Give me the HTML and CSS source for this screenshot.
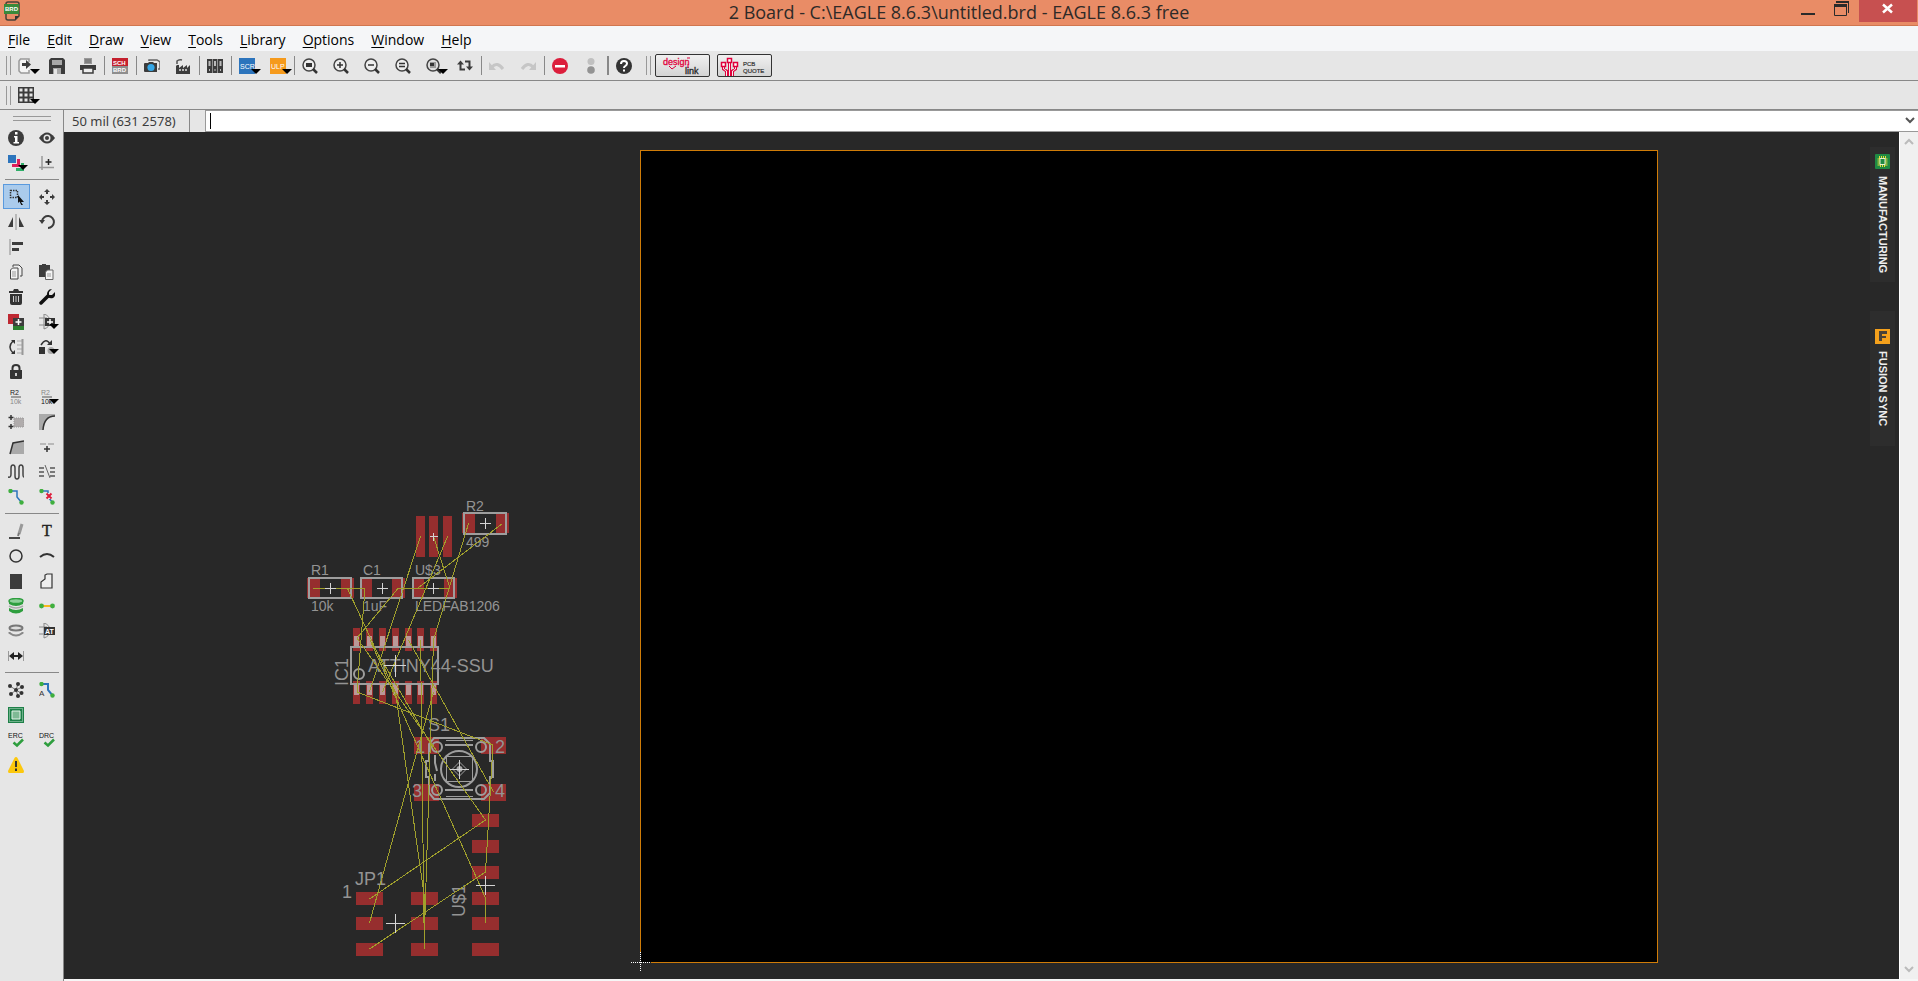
FILE: index.html
```html
<!DOCTYPE html>
<html lang="en">
<head>
  <meta charset="UTF-8">
  <meta name="viewport" content="width=device-width, initial-scale=1.0">
  <title>2 Board - C:\EAGLE 8.6.3\untitled.brd - EAGLE 8.6.3 free</title>
  <link rel="stylesheet" href="styles.css">
</head>

<body>
  <header class="titlebar">
    <svg class="app-icon" viewBox="0 0 16 20">
      <path d="M4 1h9q2 0 2 2v12l-4 4H4q-2 0-2-2V3q0-2 2-2z" fill="none" stroke="#4a4038" stroke-width="1.5"/>
      <path d="M15 15l-4 4v-4z" fill="#333"/>
      <rect x="0" y="3" width="15" height="10" fill="#3a8a3a"/>
      <text x="1" y="10" font-size="6" font-weight="bold" fill="#fff">BRD</text>
    </svg>
    <h1>2 Board - C:\EAGLE 8.6.3\untitled.brd - EAGLE 8.6.3 free</h1>
    <div class="window-buttons">
      <button aria-label="Minimize"><svg viewBox="0 0 16 18"><path d="M1 13h14v2H1z" fill="#2a2a2a"/></svg></button>
      <button aria-label="Restore"><svg viewBox="0 0 16 18"><path d="M2 1h13v12h-1V3H2z" fill="#2a2a2a"/><path d="M.5 4.500h12v11H.5z" fill="none" stroke="#2a2a2a"/><path d="M0 4h13v3H0z" fill="#2a2a2a"/></svg></button>
      <button class="close" aria-label="Close"><svg viewBox="0 0 16 18"><path d="M3 4.500l9 8M12 4.500l-9 8" stroke="#fff" stroke-width="2.500"/></svg></button>
    </div>
  </header>

  <nav class="menubar">
    <a href="#"><u>F</u>ile</a>
    <a href="#"><u>E</u>dit</a>
    <a href="#"><u>D</u>raw</a>
    <a href="#"><u>V</u>iew</a>
    <a href="#"><u>T</u>ools</a>
    <a href="#"><u>L</u>ibrary</a>
    <a href="#"><u>O</u>ptions</a>
    <a href="#"><u>W</u>indow</a>
    <a href="#"><u>H</u>elp</a>
  </nav>

  <div class="toolbar">
    <span class="handle"></span>
    <button class="tool drop" aria-label="Open"><svg viewBox="0 0 16 16"><path d="M11 4V1H2.500L1 3v10l2 2h8v-3" fill="#f4f4f4" stroke="#999" stroke-width="1.500"/><path d="M4 5h4V2l5 4.500L8 11V8H4z" fill="#3c3c3c"/></svg></button>
    <button class="tool" aria-label="Save"><svg viewBox="0 0 16 16"><path d="M2 0h12l2 2v14H0V2z" fill="#3c3c3c"/><path d="M3 2h10v5H3zM4 10h8v6H4z" fill="#a8a8a8"/><path d="M5 11h3v5H5z" fill="#e6e6e6"/></svg></button>
    <button class="tool" aria-label="Print"><svg viewBox="0 0 16 16"><path d="M4 0h8v6H4z" fill="#999"/><path d="M5 2h6M5 4h6" stroke="#666"/><path d="M0 7h16v5H0z" fill="#3c3c3c"/><path d="M3 10h10v5H3z" fill="#eee" stroke="#3c3c3c" stroke-width="1.500"/></svg></button>
    <i class="sep"></i>
    <button class="tool" aria-label="Schematic"><svg viewBox="0 0 16 16"><path d="M0 0h16v8H0z" fill="#c4202e"/><path d="M0 8h16v8H0z" fill="#8e8e8e"/><text x="1" y="7" font-size="6" font-weight="bold" fill="#fff">SCH</text><text x="1" y="14" font-size="6" font-weight="bold" fill="#fff">BRD</text></svg></button>
    <i class="sep"></i>
    <button class="tool" aria-label="CAM processor"><svg viewBox="0 0 16 16"><path d="M5 3V2h8l3 2v7h-2" fill="none" stroke="#666" stroke-width="1.500"/><path d="M1 5h3l1-1h4l1 1h3v9H1q-1 0-1-1V6q0-1 1-1z" fill="#3c3c3c"/><circle cx="7" cy="9.500" r="3.600" fill="#35a8e8"/></svg></button>
    <button class="tool" aria-label="Manufacturing"><svg viewBox="0 0 16 16"><path d="M1 16V8l1-1h2v3l4-3v3l4-3v3l3-3v9z" fill="#3c3c3c"/><path d="M2 6V3q2-2 5-1" fill="none" stroke="#555" stroke-width="1.500"/><path d="M4 12h9" stroke="#ddd" stroke-width="1.500" stroke-dasharray="2 1"/></svg></button>
    <i class="sep"></i>
    <button class="tool" aria-label="Library manager"><svg viewBox="0 0 16 16"><path d="M0 1h5v14H0zM5.500 1h5v14h-5zM11 1h5v14h-5z" fill="#3c3c3c"/><path d="M1.500 3h2v5h-2zM7 3h2v5H7zM12.500 3h2v5h-2zM2 11h1v2H2zM7.500 11h1v2h-1zM13 11h1v2h-1z" fill="#bbb"/></svg></button>
    <i class="sep"></i>
    <button class="tool drop" aria-label="Run script"><svg viewBox="0 0 16 16"><path d="M0 0h16v16H0z" fill="#2c74bc"/><text x="1" y="11" font-size="7" fill="#fff">SCR</text></svg></button>
    <button class="tool drop" aria-label="Run ULP"><svg viewBox="0 0 16 16"><path d="M0 0h16v16H0z" fill="#f59a1c"/><text x="1" y="11" font-size="7" fill="#fff">ULP</text></svg></button>
    <i class="sep"></i>
    <button class="tool" aria-label="Zoom to fit"><svg viewBox="0 0 16 16"><circle cx="7" cy="7" r="6" fill="#eee" stroke="#444" stroke-width="1.500"/><path d="M4 5h6v4H4z" fill="#333"/><path d="M11 11l4 4" stroke="#333" stroke-width="2.500"/></svg></button>
    <button class="tool" aria-label="Zoom in"><svg viewBox="0 0 16 16"><circle cx="7" cy="7" r="6" fill="#eee" stroke="#444" stroke-width="1.500"/><path d="M4 7h6M7 4v6" stroke="#333" stroke-width="1.500"/><path d="M11 11l4 4" stroke="#333" stroke-width="2.500"/></svg></button>
    <button class="tool" aria-label="Zoom out"><svg viewBox="0 0 16 16"><circle cx="7" cy="7" r="6" fill="#eee" stroke="#444" stroke-width="1.500"/><path d="M4 7h6" stroke="#333" stroke-width="1.500"/><path d="M11 11l4 4" stroke="#333" stroke-width="2.500"/></svg></button>
    <button class="tool" aria-label="Redraw"><svg viewBox="0 0 16 16"><circle cx="7" cy="7" r="6" fill="#eee" stroke="#444" stroke-width="1.500"/><path d="M4 5.500h6M4 8.500h6" stroke="#333" stroke-width="1.500"/><path d="M11 11l4 4" stroke="#333" stroke-width="2.500"/></svg></button>
    <button class="tool drop" aria-label="Zoom select"><svg viewBox="0 0 16 16"><circle cx="7" cy="7" r="6" fill="#ddd" stroke="#444" stroke-width="1.500"/><path d="M4 4h6v6H4z" fill="#999"/><path d="M4 5h4v3H4z" fill="#333"/><path d="M11 11l4 4" stroke="#333" stroke-width="2.500"/></svg></button>
    <button class="tool" aria-label="Refresh"><svg viewBox="0 0 16 16"><path d="M3.500 5v6.500H8M12.500 10V3.500H8" fill="none" stroke="#3c3c3c" stroke-width="2"/><path d="M0 6.500L3.500 2.500 7 6.500zM9 8.500l3.500 4 3.500-4z" fill="#3c3c3c"/></svg></button>
    <i class="sep"></i>
    <button class="tool" aria-label="Undo" disabled><svg viewBox="0 0 16 16"><path d="M3 9q5-6 11 2" fill="none" stroke="#c6c6c6" stroke-width="3"/><path d="M0 4v8h7z" fill="#c6c6c6"/></svg></button>
    <button class="tool" aria-label="Redo" disabled><svg viewBox="0 0 16 16"><path d="M13 9Q8 3 2 11" fill="none" stroke="#c6c6c6" stroke-width="3"/><path d="M16 4v8H9z" fill="#c6c6c6"/></svg></button>
    <i class="sep"></i>
    <button class="tool" aria-label="Stop"><svg viewBox="0 0 16 16"><circle cx="8" cy="8" r="8" fill="#dc1e3c"/><path d="M3 7h10v2.500H3z" fill="#fff"/></svg></button>
    <button class="tool" aria-label="Go"><svg viewBox="0 0 16 16"><circle cx="8" cy="3.500" r="3.500" fill="#c0c0c0"/><circle cx="8" cy="12" r="3.800" fill="#939393"/></svg></button>
    <i class="sep thick"></i>
    <button class="tool" aria-label="Help"><svg viewBox="0 0 16 16"><circle cx="8" cy="8" r="8" fill="#333"/><path d="M5 6q0-3 3-3t3 2.500Q11 7 9.500 7.800 8 8.500 8 10" fill="none" stroke="#fff" stroke-width="2"/><path d="M7 11.500h2v2H7z" fill="#fff"/></svg></button>
    <span class="handle"></span>
    <button class="banner" aria-label="Design link"><svg viewBox="0 0 53 21"><text x="7" y="10" font-size="9" fill="#e0003c" stroke="#e0003c" stroke-width=".3">design</text><text x="29" y="19" font-size="9" fill="#222" stroke="#222" stroke-width=".3">link</text><path d="M13 11l3 3 4-3M32 9v4M31 3h3" fill="none" stroke="#e0003c"/></svg></button>
    <button class="banner" aria-label="PCB quote"><svg viewBox="0 0 53 21"><path d="M5.500 11v3l3 2v5M17.500 11v3l-3 2v5M11.500 7v14" fill="none" stroke="#e0003c" stroke-width="3"/><path d="M5.500 11v3l3 2v5M17.500 11v3l-3 2v5M11.500 7v14" fill="none" stroke="#eee"/><path d="M3.500 7.500h4v4h-4zM15.500 7.500h4v4h-4zM9.500 3.500h4v4h-4z" fill="#fff" stroke="#e0003c" stroke-width="1.500"/><text x="25" y="11" font-size="6" fill="#333" stroke="#333" stroke-width=".2">PCB</text><text x="25" y="18" font-size="6" fill="#333" stroke="#333" stroke-width=".2">QUOTE</text></svg></button>
  </div>

  <div class="toolbar second">
    <span class="handle"></span>
    <button class="tool drop" aria-label="Grid"><svg viewBox="0 0 16 16"><path d="M0 0h16v16H0z" fill="#3c3c3c"/><path d="M1.500 1.500h3v3h-3zM6.500 1.500h3v3h-3zM11.500 1.500h3v3h-3zM1.500 6.500h3v3h-3zM6.500 6.500h3v3h-3zM11.500 6.500h3v3h-3zM1.500 11.500h3v3h-3zM6.500 11.500h3v3h-3zM11.500 11.500h3v3h-3z" fill="#e6e6e6"/></svg></button>
  </div>

  <main>
    <aside class="sidebar">
      <div class="side-handle"></div>
      <div class="palette">
        <button class="tool" aria-label="Info"><svg viewBox="0 0 16 16"><circle cx="8" cy="8" r="8" fill="#3c3c3c"/><path d="M7 2h2.500v2.500H7zM6 6h3.500v6H11v1.500H5.500V12H7V7.500H6z" fill="#fff"/></svg></button>
        <button class="tool" aria-label="Show"><svg viewBox="0 0 16 16"><path d="M0 8q8-11 16 0-8 11-16 0z" fill="#3c3c3c"/><circle cx="8" cy="8" r="3.500" fill="#e6e6e6"/><circle cx="8" cy="8" r="2" fill="#3c3c3c"/></svg></button>
        <button class="tool drop" aria-label="Layers"><svg viewBox="0 0 16 16"><path d="M0 0h8v8H0z" fill="#2c74bc"/><path d="M9 4h3v8H4V9h5z" fill="#dc1e5a"/><path d="M13 8h3v8H8v-3h5z" fill="#2fae68"/></svg></button>
        <button class="tool" aria-label="Mark"><svg viewBox="0 0 16 16"><path d="M3 1v14M0 12.500h15" stroke="#999" stroke-width="1.500"/><path d="M9.500 4v6M6.500 7h6" stroke="#222" stroke-width="1.500"/></svg></button>
      </div>
      <hr>
      <div class="palette">
        <button class="tool active" aria-label="Group"><svg viewBox="0 0 16 16"><path d="M2.500 1.500h7v7h-7z" fill="none" stroke="#333" stroke-width="1.500" stroke-dasharray="1.500 1"/><path d="M10 6l6 7h-3l2 3-1.500.5-2-4L10 14z" fill="#111"/></svg></button>
        <button class="tool" aria-label="Move"><svg viewBox="0 0 16 16"><path d="M8 0l3 3H9v2H7V3H5zM8 16l3-3H9v-2H7v2H5zM0 8l3-3v2h2v2H3v2zM16 8l-3-3v2h-2v2h2v2z" fill="#3c3c3c"/></svg></button>
        <button class="tool" aria-label="Mirror"><svg viewBox="0 0 16 16"><path d="M5 3v10H0zM11 3v10h5z" fill="#3c3c3c"/><path d="M8 0v16" stroke="#aaa" stroke-width="1.500"/></svg></button>
        <button class="tool" aria-label="Rotate"><svg viewBox="0 0 16 16"><path d="M3 7a6 6 0 1 1 6 7" fill="none" stroke="#3c3c3c" stroke-width="2"/><path d="M0 6h6l-3 4z" fill="#3c3c3c"/></svg></button>
        <button class="tool" aria-label="Align"><svg viewBox="0 0 16 16"><path d="M2 0v16" stroke="#aaa" stroke-width="1.500"/><path d="M4 3h11v3H4zM4 9h7v3H4z" fill="#3c3c3c"/></svg></button>
        <span></span>
        <button class="tool" aria-label="Copy"><svg viewBox="0 0 16 16"><path d="M5 3V1h6l3 3v8h-2" fill="#eee" stroke="#444"/><path d="M2.500 6l2-2H10v11H2.500z" fill="#f4f4f4" stroke="#444"/><path d="M4 8h4M4 10h4M4 12h4" stroke="#999"/></svg></button>
        <button class="tool" aria-label="Paste"><svg viewBox="0 0 16 16"><path d="M0 1h3V0h4v1h4v12H0z" fill="#3c3c3c"/><path d="M6.500 8l2-2H14v9.500H6.500z" fill="#f4f4f4" stroke="#666"/><path d="M8 10h4M8 12h4" stroke="#999"/></svg></button>
        <button class="tool" aria-label="Delete"><svg viewBox="0 0 16 16"><path d="M1 2h4l1-2h4l1 2h4v2H1zM2 5h12v9q0 2-2 2H4q-2 0-2-2z" fill="#333"/><path d="M5.500 7v6M8 7v6M10.500 7v6" stroke="#ccc"/></svg></button>
        <button class="tool" aria-label="Change"><svg viewBox="0 0 16 16"><path d="M2 14l7-7" stroke="#111" stroke-width="3.500" stroke-linecap="round"/><path d="M13 0L10 3v3h3l3-3q1 4-2 6-3 1-5-1-2-3 0-6 1-2 4-2z" fill="#111"/></svg></button>
        <button class="tool" aria-label="Add"><svg viewBox="0 0 16 16"><path d="M0 0h11v10H0z" fill="#be2832"/><path d="M5 10h11v6H5z" fill="#2c8030"/><path d="M5 4h11v8H5z" fill="#3c3c3c"/><path d="M7.500 8h6M10.500 5v6" stroke="#fff" stroke-width="1.500"/></svg></button>
        <button class="tool drop" aria-label="Replace"><svg viewBox="0 0 16 16"><path d="M0 4h8M0 11h8M5 0v15q6-2 6-7.500T5 0" fill="none" stroke="#888"/><path d="M6 4h10v8H6z" fill="#333"/><path d="M8 8h6M11 5v6" stroke="#fff" stroke-width="1.500"/></svg></button>
        <button class="tool" aria-label="Pinswap"><svg viewBox="0 0 16 16"><path d="M5 2q-6 6 0 12" fill="none" stroke="#333" stroke-width="1.500"/><path d="M3 1h4v4zM3 15h4v-4z" fill="#333"/><path d="M9 2h6M9 6h6M9 10h6M9 14h6" stroke="#aaa"/><path d="M14.500 0v16" stroke="#999" stroke-width="2"/></svg></button>
        <button class="tool drop" aria-label="Gateswap"><svg viewBox="0 0 16 16"><path d="M2 6q5-8 9-1" fill="none" stroke="#333" stroke-width="1.500"/><path d="M8 6h5V1z" fill="#333"/><path d="M0 8h6v7H0z" fill="#333"/><circle cx="12" cy="11.500" r="3.500" fill="#aaa"/></svg></button>
        <button class="tool" aria-label="Lock"><svg viewBox="0 0 16 16"><path d="M4.500 7V4q0-3 3.500-3t3.500 3v3" fill="none" stroke="#333" stroke-width="2"/><path d="M2 6h12v8q0 1-1 1H3q-1 0-1-1z" fill="#333"/><path d="M8 9v3" stroke="#ccc" stroke-width="2"/></svg></button>
        <span></span>
        <button class="tool" aria-label="Name"><svg viewBox="0 0 16 16"><text x="2" y="6" font-size="7" fill="#222">R2</text><path d="M3 8h10" stroke="#555"/><text x="2" y="15" font-size="7" fill="#888">10k</text></svg></button>
        <button class="tool drop" aria-label="Value"><svg viewBox="0 0 16 16"><text x="2" y="6" font-size="7" fill="#888">R2</text><path d="M3 8h10" stroke="#555"/><text x="2" y="15" font-size="7" fill="#111">10k</text></svg></button>
        <button class="tool" aria-label="Smash"><svg viewBox="0 0 16 16"><path d="M6 4h10v9H6z" fill="#b0acac" stroke="#999" stroke-dasharray="1 1"/><path d="M3 1v5M.5 3.500h5M3 10v5M.5 12.500h5" stroke="#333" stroke-width="1.500"/></svg></button>
        <button class="tool" aria-label="Miter"><svg viewBox="0 0 16 16"><path d="M0 0h16v2Q5 4 4 16H0z" fill="#aaa"/><path d="M16 2Q5 2 4 16" fill="none" stroke="#333" stroke-width="1.500"/></svg></button>
        <button class="tool" aria-label="Split"><svg viewBox="0 0 16 16"><path d="M2 15L5 4l11-2v13z" fill="#aaa"/><path d="M2 15L5 4l11-2" fill="none" stroke="#333" stroke-width="1.500"/></svg></button>
        <button class="tool" aria-label="Optimize"><svg viewBox="0 0 16 16"><path d="M1 5h6M9 5h6" stroke="#aaa" stroke-width="1.500"/><path d="M8 7v6M5 10h6" stroke="#333" stroke-width="1.500"/></svg></button>
        <button class="tool" aria-label="Meander"><svg viewBox="0 0 16 16"><path d="M0 13q3 1 3-3V4q0-3 2-3t2 3v8q0 3 2 3t2-3V4q0-3 2-3t2 3v6q0 3 1 3" fill="none" stroke="#444" stroke-width="1.500"/></svg></button>
        <button class="tool" aria-label="Differential pair"><svg viewBox="0 0 16 16"><path d="M0 4h5M0 8h5M0 12h5M11 4h5M11 8h5M11 12h5" stroke="#555" stroke-width="1.500"/><path d="M6 1l5 13" stroke="#666"/></svg></button>
        <button class="tool" aria-label="Route"><svg viewBox="0 0 16 16"><path d="M3 2h6v6l5 6" fill="none" stroke="#2c74bc" stroke-width="1.500"/><circle cx="2.500" cy="2" r="2.200" fill="#3faf3f"/><circle cx="13.500" cy="13.500" r="2.200" fill="#3faf3f"/></svg></button>
        <button class="tool" aria-label="Ripup"><svg viewBox="0 0 16 16"><path d="M3 2h6v6l5 6" fill="none" stroke="#2c74bc" stroke-width="1.500"/><circle cx="2.500" cy="2" r="2.200" fill="#3faf3f"/><circle cx="13.500" cy="13.500" r="2.200" fill="#3faf3f"/><path d="M7 4h6v6H7z" fill="#eee"/><path d="M7.500 4.500l5 5M12.500 4.500l-5 5" stroke="#dc1e3c" stroke-width="2"/></svg></button>
      </div>
      <hr>
      <div class="palette">
        <button class="tool" aria-label="Line"><svg viewBox="0 0 16 16"><path d="M14 1l-3 10" stroke="#999" stroke-width="3"/><path d="M11 10l-1 3" stroke="#777" stroke-width="2"/><path d="M1 15h11" stroke="#111" stroke-width="1.500"/></svg></button>
        <button class="tool" aria-label="Text"><svg viewBox="0 0 16 16"><text x="3" y="13" class="serif" font-size="16" fill="#222" stroke="#222" stroke-width=".4">T</text></svg></button>
        <button class="tool" aria-label="Circle"><svg viewBox="0 0 16 16"><circle cx="8" cy="8" r="6" fill="none" stroke="#333" stroke-width="1.500"/></svg></button>
        <button class="tool" aria-label="Arc"><svg viewBox="0 0 16 16"><path d="M1 9q7-6 14 0" fill="none" stroke="#333" stroke-width="2"/></svg></button>
        <button class="tool" aria-label="Rectangle"><svg viewBox="0 0 16 16"><path d="M2 1h12v15H2z" fill="#3c3c3c"/></svg></button>
        <button class="tool" aria-label="Polygon"><svg viewBox="0 0 16 16"><path d="M2 15V9l4-3V2l2-1h5v14z" fill="#eee" stroke="#333" stroke-width="1.200"/></svg></button>
        <button class="tool" aria-label="Via"><svg viewBox="0 0 16 16"><path d="M1 3v3q7 4 14 0V3zM1 10v3q7 5 14 0v-3q-7 4-14 0z" fill="#2e9e3e"/><ellipse cx="8" cy="3" rx="7" ry="2.500" fill="#8fd09a" stroke="#2e9e3e" stroke-width="1.500"/><path d="M1 8q7 4 14 0" stroke="#aaa" fill="none" stroke-width="1.500"/></svg></button>
        <button class="tool" aria-label="Signal"><svg viewBox="0 0 16 16"><path d="M2 8h12" stroke="#f5b81c" stroke-width="2"/><circle cx="2.500" cy="8" r="2.400" fill="#3faf3f"/><circle cx="13.500" cy="8" r="2.400" fill="#3faf3f"/></svg></button>
        <button class="tool" aria-label="Hole"><svg viewBox="0 0 16 16"><ellipse cx="8" cy="5" rx="6.500" ry="2.500" fill="#ddd" stroke="#777" stroke-width="2"/><path d="M1.500 9v1q6.500 5 13 0V9" fill="none" stroke="#888" stroke-width="2"/></svg></button>
        <button class="tool" aria-label="Attribute"><svg viewBox="0 0 16 16"><path d="M0 4h8M0 11h8M5 0v15q6-2 6-7.500T5 0" fill="none" stroke="#888"/><path d="M5 4h11v8H5z" fill="#333"/><text x="6" y="11" font-size="7" font-weight="bold" fill="#fff">AT</text></svg></button>
        <button class="tool" aria-label="Dimension"><svg viewBox="0 0 16 16"><path d="M.5 3v10M15.500 3v10" stroke="#999"/><path d="M1 8l5-4v3h4V4l5 4-5 4V9H6v3z" fill="#222"/></svg></button>
      </div>
      <hr>
      <div class="palette">
        <button class="tool" aria-label="Ratsnest"><svg viewBox="0 0 16 16"><path d="M8 8L2 4M8 8l2-6M8 8l6-3M8 8l5 3M8 8l2 6M8 8l-5 4" stroke="#777"/><g fill="#333"><circle cx="8" cy="8" r="2"/><circle cx="2" cy="4" r="2"/><circle cx="10" cy="2" r="2"/><circle cx="14" cy="5" r="2"/><circle cx="13.500" cy="11" r="2"/><circle cx="10" cy="14" r="2"/><circle cx="3" cy="12" r="2"/></g></svg></button>
        <button class="tool" aria-label="Autorouter"><svg viewBox="0 0 16 16"><path d="M3 2h6v6l5 6" fill="none" stroke="#2c74bc" stroke-width="2"/><circle cx="2.500" cy="2" r="2.200" fill="#3faf3f"/><circle cx="13.500" cy="13.500" r="2.200" fill="#3faf3f"/><text x="0" y="14" font-size="8" fill="#333">A</text></svg></button>
        <button class="tool" aria-label="Fill"><svg viewBox="0 0 16 16"><path d="M0 0h16v16H0z" fill="#1e8048"/><path d="M1.500 1.500h13v13h-13z" fill="none" stroke="#bfe0cc" stroke-dasharray="1 1"/><path d="M4 4h8v8H4z" fill="#7fba95" stroke="#e6f4ea"/></svg></button>
        <span></span>
        <button class="tool" aria-label="ERC"><svg viewBox="0 0 16 16"><text x="0" y="6" font-size="7" fill="#111">ERC</text><path d="M5.500 10.500l3.500 3 6-6" fill="none" stroke="#2e9e3e" stroke-width="2.500"/></svg></button>
        <button class="tool" aria-label="DRC"><svg viewBox="0 0 16 16"><text x="0" y="6" font-size="7" fill="#111">DRC</text><path d="M5.500 10.500l3.500 3 6-6" fill="none" stroke="#2e9e3e" stroke-width="2.500"/></svg></button>
        <button class="tool" aria-label="Errors"><svg viewBox="0 0 16 16"><path d="M8 0q1 0 1.500 1L16 14q0 2-1 2H1q-1 0-1-2L6.500 1Q7 0 8 0z" fill="#fcc80e"/><path d="M8 4v6M8 11.500v2.500" stroke="#333" stroke-width="2"/></svg></button>
      </div>
    </aside>

    <section class="editor">
      <div class="command-row">
        <label class="coords" for="command">50 mil (631 2578)</label>
        <div class="command-box">
          <span class="caret"></span>
          <input type="text" id="command">
          <button aria-label="History"><svg viewBox="0 0 10 8"><path d="M1 1l4 4 4-4" fill="none" stroke="#555" stroke-width="2"/></svg></button>
        </div>
      </div>

      <div class="workspace">
        <div class="canvas">
          <svg class="board" viewBox="64 132 1835 847" preserveAspectRatio="xMinYMin meet">
            <rect x="640.5" y="150.5" width="1017" height="812" fill="#000" stroke="#d07c08"/>
            <path d="M640.500 952v20M631 962.500h20" stroke="#282828"/>
            <path d="M640.500 952v20M631 962.500h20" stroke="#fff" stroke-dasharray="1 1"/>

            <!-- pads -->
            <g class="pads">
              <path d="M462 513h13v20h-13zM496 513h13v20h-13z"/>
              <path d="M307 578h13v20h-13zM341 578h13v20h-13z"/>
              <path d="M360 578h12v20h-12zM392 578h13v20h-13z"/>
              <path d="M412 578h12v20h-12zM444 578h13v20h-13z"/>
              <path d="M416 516h9v41h-9zM429 516h9v41h-9zM443 516h9v41h-9z"/>
              <path d="M353 628h7v23h-7zM366 628h7v23h-7zM379 628h7v23h-7zM392 628h7v23h-7zM405 628h7v23h-7zM417 628h7v23h-7zM430 628h7v23h-7z"/>
              <path d="M353 681h7v23h-7zM366 681h7v23h-7zM379 681h7v23h-7zM392 681h7v23h-7zM405 681h7v23h-7zM417 681h7v23h-7zM430 681h7v23h-7z"/>
              <path d="M414 737h25v17h-25zM481 737h25v17h-25zM414 784h25v17h-25zM481 784h25v17h-25z"/>
              <path d="M472 814h27v13h-27zM472 840h27v13h-27zM472 866h27v13h-27zM472 892h27v13h-27zM472 917h27v13h-27zM472 943h27v13h-27z"/>
              <path d="M356 892h27v13h-27zM356 917h27v13h-27zM356 943h27v13h-27z"/>
              <path d="M411 892h27v13h-27zM411 917h27v13h-27zM411 943h27v13h-27z"/>
            </g>
            <g class="pins">
              <path d="M354 636h5v11h-5zM367 636h5v11h-5zM380 636h5v11h-5zM393 636h5v11h-5zM406 636h5v11h-5zM418 636h5v11h-5zM431 636h5v11h-5z"/>
              <path d="M354 684h5v11h-5zM367 684h5v11h-5zM380 684h5v11h-5zM393 684h5v11h-5zM406 684h5v11h-5zM418 684h5v11h-5zM431 684h5v11h-5z"/>
            </g>

            <!-- package outlines -->
            <g class="outline">
              <rect x="464" y="513" width="42" height="21"/>
              <rect x="309" y="578" width="42" height="20"/>
              <rect x="361" y="578" width="41" height="20"/>
              <rect x="413" y="578" width="41" height="20"/>
              <rect x="351" y="647" width="87" height="37"/>
              <circle cx="359" cy="674" r="5"/>
              <path d="M434 738h50l6 6v17h3v16h-3v16l-6 6h-50l-5-6v-16h-3v-16h3v-17z"/>
              <circle cx="459" cy="769" r="18"/>
              <circle cx="437" cy="747" r="5"/><circle cx="481" cy="747" r="5"/>
              <circle cx="437" cy="790" r="5"/><circle cx="481" cy="790" r="5"/>
              <path d="M445 745h28M445 790h28M435 755v8l2 8M435 781v-7"/>
              <path class="thin" d="M446.500 756.500h26v25h-26zM446 740.500h27M446 796.500h27M459.500 762l7 7-7 7-7-7z"/>
            </g>
            <circle cx="459.500" cy="769" r="3" fill="#aaa"/>

            <!-- part names and values -->
            <g class="names">
              <text x="466" y="511">R2</text>
              <text x="466" y="547">499</text>
              <text x="311" y="575">R1</text>
              <text x="311" y="611">10k</text>
              <text x="363" y="575">C1</text>
              <text x="363" y="611">1uF</text>
              <text x="415" y="575">U$3</text>
              <text x="415" y="611">LEDFAB1206</text>
            </g>
            <g class="names big">
              <text x="368" y="672">ATTINY44-SSU</text>
              <text x="428" y="731">S1</text>
              <text x="355" y="885">JP1</text>
              <text x="342" y="898">1</text>
              <text x="415" y="753">1</text>
              <text x="495" y="753">2</text>
              <text x="412" y="797">3</text>
              <text x="495" y="797">4</text>
              <text transform="translate(348 686) rotate(-90)">IC1</text>
              <text transform="translate(465 917) rotate(-90)">U$1</text>
            </g>

            <!-- airwires -->
            <g class="wires">
              <path d="M313 588.500H365M398 588.500H450"/>
              <path d="M347.500 588.500L395.500 692L424.500 898V949"/>
              <path d="M365 588.500L357 692L493 745L485.500 872L369.500 949"/>
              <path d="M398 588.500L357 638L485.500 820L369.500 899"/>
              <path d="M370 640L485.500 898V923M370 640L433 748"/>
              <path d="M420.500 536.500L369.500 692M447.500 536.500L382.500 692"/>
              <path d="M433.500 536.500L450 588.500M468.500 523.500L433.500 640M502.500 523.500L418 588"/>
              <path d="M408.500 640L493.500 792"/>
              <path d="M420.500 640L424 923M433.500 640L425 915"/>
              <path d="M433.500 692L369.500 923"/>
            </g>

            <!-- origins -->
            <path class="origins" d="M480 523.500h11M485.500 518v11M325 588.500h11M330.500 583v11M377 588.500h11M382.500 583v11M428 588.500h11M433.500 583v11M430 536.500h8M433.500 533v8M384 665.500h22M395.500 655v22M450 769.500h19M459.500 760v19M476 885.500h19M485.500 876v19M386 923.500h19M395.500 914v19"/>
          </svg>

          <div class="side-tabs">
            <button>
              <svg viewBox="0 0 15 15"><rect width="15" height="15" rx="1" fill="#1f8a43"/><path d="M4 3.500h7v8H4z" fill="none" stroke="#e6dc3c" stroke-width="3" stroke-dasharray="1 1"/><path d="M5 4.500h5v6H5z" fill="#1f8a43" stroke="#e8f0d0"/></svg>
              <span>MANUFACTURING</span>
            </button>
            <button>
              <svg viewBox="0 0 15 15"><rect width="15" height="15" fill="#f5a11c"/><path d="M4 2h8v3H7v2h4v2H7v3H4z" fill="#4a4238"/></svg>
              <span>FUSION SYNC</span>
            </button>
          </div>
        </div>
        <div class="scrollbar">
          <svg viewBox="0 0 10 8"><path d="M1 6l4-4 4 4" fill="none" stroke="#bbb" stroke-width="2"/></svg>
          <svg viewBox="0 0 10 8"><path d="M1 2l4 4 4-4" fill="none" stroke="#bbb" stroke-width="2"/></svg>
        </div>
      </div>
    </section>
  </main>
</body>
</html>
```

FILE: styles.css
```css
* {
  box-sizing: border-box;
}
body {
  margin: 0;
  height: 100vh;
  display: flex;
  flex-direction: column;
  overflow: hidden;
  background-color: #e6e6e6;
  font-family: "Open Sans", "Noto Sans", sans-serif;
}
button {
  margin: 0;
  padding: 0;
  border: none;
  background: none;
}
svg {
  display: block;
  font-family: "Liberation Sans", Arial, sans-serif;
}

/* title bar */
.titlebar {
  position: relative;
  display: flex;
  align-items: flex-start;
  justify-content: center;
  height: 26px;
  background-color: #e98c66;
  border-bottom: 1px solid #d0764f;
}
.titlebar h1 {
  margin: 0;
  font-size: 18px;
  font-weight: normal;
  line-height: 25px;
  color: #2e2a28;
}
.app-icon {
  position: absolute;
  left: 4px;
  top: 1px;
  width: 16px;
  height: 20px;
}
.window-buttons {
  position: absolute;
  right: 1px;
  top: 0;
  display: flex;
}
.window-buttons button {
  width: 34px;
  height: 22px;
}
.window-buttons svg {
  width: 16px;
  height: 18px;
  margin: 0 auto 4px;
}
.window-buttons .close {
  width: 58px;
  background-color: #c75050;
}

/* menu */
.menubar {
  display: flex;
  gap: 17px;
  height: 25px;
  padding-left: 8px;
  background-color: #f5f6f8;
}
.menubar a {
  font-size: 14px;
  line-height: 27px;
  color: #000;
  text-decoration: none;
}
.menubar u {
  text-underline-offset: 2px;
}

/* toolbars */
.toolbar {
  display: flex;
  align-items: center;
  height: 30px;
  padding-left: 6px;
  border-bottom: 1px solid #888;
}
.toolbar.second {
  height: 29px;
}
.handle {
  width: 5px;
  height: 19px;
  border-left: 1px solid #999;
  border-right: 1px solid #999;
}
.tool {
  position: relative;
  width: 31px;
  height: 25px;
}
.tool svg {
  width: 16px;
  height: 16px;
  margin: 0 8px 0 7px;
}
.drop::after {
  content: "";
  position: absolute;
  left: 19px;
  top: 16px;
  border: 5px solid transparent;
  border-top-color: #000;
  border-bottom: none;
}
.sep {
  width: 1px;
  height: 19px;
  background-color: #888;
}
.sep.thick {
  width: 2px;
}
.tool + .handle {
  margin-left: 6px;
}
.banner {
  width: 55px;
  height: 23px;
  margin-left: 4px;
  border: 1px solid #333;
  border-radius: 2px;
  background: linear-gradient(#f0f0f0, #d4d4d4);
}
.banner + .banner {
  margin-left: 7px;
}

/* left palette */
main {
  flex: 1;
  display: flex;
  min-height: 0;
}
.sidebar {
  width: 64px;
  border-right: 1px solid #888;
}
.side-handle {
  height: 5px;
  margin: 6px 12px 4px 13px;
  border-top: 1px solid #999;
  border-bottom: 1px solid #999;
}
.palette {
  display: grid;
  grid-template-columns: 31px 31px;
  grid-auto-rows: 25px;
  padding-left: 1px;
}
.palette .drop::after {
  left: 17px;
  top: 15px;
}
.palette .active {
  width: 27px;
  margin-left: 2px;
  border: 1px solid #5a9ade;
  background-color: #aacbec;
}
.palette .active svg {
  margin: 0 4px;
}
.sidebar hr {
  height: 1px;
  margin: 4px 4px 4px 5px;
  border: none;
  background-color: #888;
}
.serif {
  font-family: "Liberation Serif", serif;
}

/* command line */
.editor {
  flex: 1;
  display: flex;
  flex-direction: column;
  min-width: 0;
}
.command-row {
  display: flex;
  height: 22px;
}
.coords {
  width: 126px;
  padding-left: 8px;
  border-right: 1px solid #888;
  font-family: "Noto Sans", sans-serif;
  font-size: 13px;
  line-height: 23px;
  color: #3c3c3c;
}
.command-box {
  flex: 1;
  display: flex;
  align-items: center;
  margin-left: 15px;
  border: 1px solid #999;
  border-right: none;
  background-color: #fff;
}
.command-box input {
  flex: 1;
  height: 18px;
  border: none;
  outline: none;
  font-size: 13px;
}
.caret {
  width: 1px;
  height: 16px;
  margin-left: 4px;
  background-color: #000;
}
.command-box svg {
  width: 10px;
  height: 8px;
  margin-right: 3px;
}

/* board */
.workspace {
  flex: 1;
  display: flex;
  min-height: 0;
  border-bottom: 2px solid #f6f6f6;
}
.canvas {
  position: relative;
  flex: 1;
  min-width: 0;
  background-color: #282828;
}
.board {
  width: 100%;
  height: 100%;
}
.pads {
  fill: #962e2e;
}
.pins {
  fill: #bb9898;
}
.outline {
  fill: none;
  stroke: #9e9e9e;
  stroke-width: 2;
}
.outline .thin {
  stroke-width: 1;
}
.names {
  fill: #949494;
  font-size: 14px;
}
.names.big {
  font-size: 18px;
}
.wires {
  fill: none;
  stroke: #a0a02c;
  shape-rendering: crispEdges;
}
.origins {
  fill: none;
  stroke: #d4d4d4;
}
.side-tabs {
  position: absolute;
  top: 15px;
  right: 4px;
  display: flex;
  flex-direction: column;
  gap: 29px;
}
.side-tabs button {
  display: flex;
  flex-direction: column;
  align-items: center;
  justify-content: center;
  gap: 7px;
  width: 25px;
  height: 135px;
  padding-bottom: 2px;
  background-color: #2d2d2d;
}
.side-tabs svg {
  width: 15px;
  height: 15px;
}
.side-tabs span {
  writing-mode: vertical-rl;
  font-family: "Liberation Sans", Arial, sans-serif;
  font-size: 11px;
  font-weight: bold;
  line-height: 14px;
  color: #eee;
}
.scrollbar {
  display: flex;
  flex-direction: column;
  justify-content: space-between;
  align-items: center;
  width: 19px;
  padding: 6px 0;
  border-left: 1px solid #fff;
  background-color: #f0f0f0;
}
.scrollbar svg {
  width: 10px;
  height: 8px;
}
```
